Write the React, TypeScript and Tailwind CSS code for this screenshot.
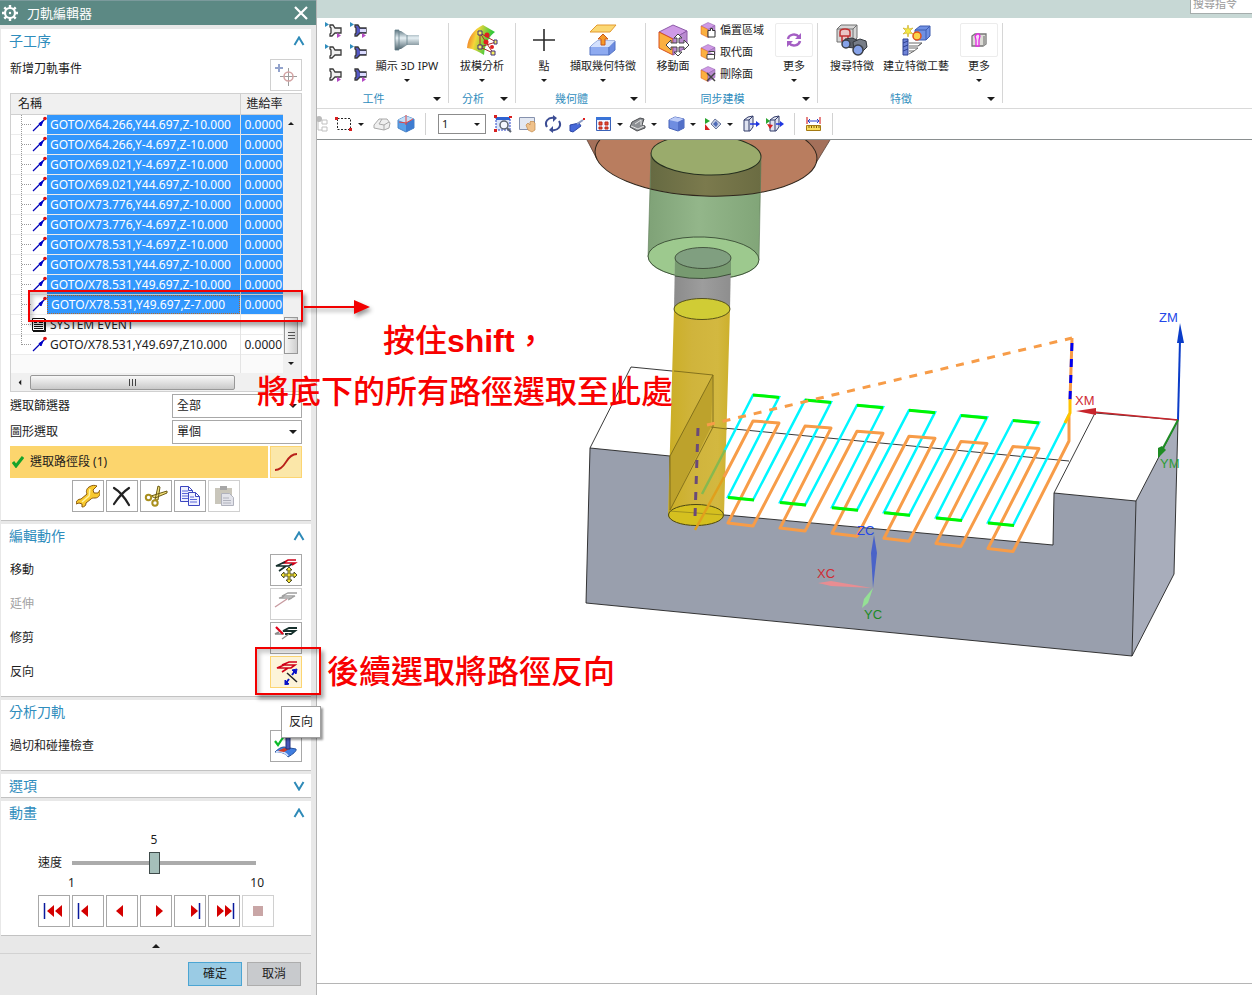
// Toolpath editor: dialog on the left, ribbon and 3D part view on the right,
// with the tutorial call-outs laid over both.

import { useState } from "react";
import type { ReactNode } from "react";
import { clsx } from "clsx";

const UI = "font-['Noto_Sans','Noto_Sans_CJK_TC',sans-serif]";

/* ---------- small shared pieces ---------- */

function Down({ big, className }: { big?: boolean; className?: string }) {
  return (
    <svg
      aria-hidden="true"
      viewBox="0 0 8 4"
      className={clsx("shrink-0 fill-[#1c1c1c]", big ? "h-1 w-2" : "h-[3px] w-[6px]", className)}
    >
      <path d="M0 0h8L4 4z" />
    </svg>
  );
}

function Svg({ w, h, children }: { w: number; h: number; children: ReactNode }) {
  return (
    <svg aria-hidden="true" width={w} height={h} viewBox={`0 0 ${w} ${h}`} fill="none" className="shrink-0">
      {children}
    </svg>
  );
}

function IconButton({
  label,
  tone = "normal",
  children,
}: {
  label: string;
  tone?: "normal" | "disabled" | "active" | "picked";
  children: ReactNode;
}) {
  return (
    <button
      type="button"
      aria-label={label}
      disabled={tone === "disabled"}
      className={clsx(
        "flex size-8 shrink-0 items-center justify-center border",
        tone === "normal" && "border-[#a8a8a8] bg-white",
        tone === "disabled" && "border-[#d0d0d0] bg-white",
        tone === "active" && "border-[#fcd572] bg-[#fdf4d9]",
        tone === "picked" && "border-[#fcd572] bg-[#fbe7a9]",
      )}
    >
      {children}
    </button>
  );
}

/* ---------- dialog icons ---------- */

function GotoIcon() {
  return (
    <Svg w={16} h={16}>
      <path d="M2 15 14 3" stroke="#0000b4" strokeWidth="1.200" />
      <path d="M8 7.500 12 5l-2 5z" fill="#0000c8" stroke="#0000c8" />
      <circle cx="14" cy="2.500" r="1.800" fill="#e01010" />
    </Svg>
  );
}

function EventIcon() {
  return (
    <Svg w={16} h={16}>
      <path d="M1.500 2.500h12v12h-12z" fill="#fff" stroke="#111" />
      <path d="M14.500 3v12.500H2" stroke="#111" />
      <path d="M3 6.500h3M8 4.500h4M8 6.500h4M3 8.500h9M3 10.500h9M3 12.500h9M3 4.500h3" stroke="#111" />
    </Svg>
  );
}

const WrenchIcon = () => (
  <Svg w={24} h={24}>
    <path
      d="M13 3c3-2 6-2 8-1l-4 4 1 3 4 0 2-3c1 4-1 8-5 8-2 0-3 0-4 1l-5 4c0 3-2 4-4 4l0-3-3-1-3 1c0-3 2-5 5-5l6-5c-1-2-1-5 2-7z"
      fill="#f8c92e"
      stroke="#8a5a10"
    />
    <path d="M14 5c-1 3 0 5-1 7l-7 6" stroke="#fff3a0" strokeWidth="1.500" />
  </Svg>
);

const DeleteIcon = () => (
  <Svg w={24} h={24}>
    <path d="M4 4c5 3 11 10 15 17M19 4C13 8 8 14 4 20" stroke="#222" strokeWidth="2.200" strokeLinecap="round" />
  </Svg>
);

const ScissorsIcon = () => (
  <Svg w={24} h={24}>
    <path d="m7 12 16-5 0 2-12 5zM11 16l3-14 2 1-2 13z" fill="#f3e27b" stroke="#6b5a12" />
    <circle cx="4.500" cy="13.500" r="2.700" fill="#fff" stroke="#a98f1e" strokeWidth="2" />
    <circle cx="11" cy="19" r="2.700" fill="#fff" stroke="#a98f1e" strokeWidth="2" />
  </Svg>
);

const CopyIcon = () => (
  <Svg w={24} h={24}>
    <path d="M2.500 2.500h8l4 4v11h-12zM10.500 2.500v4h4" fill="#eef0ff" stroke="#3c46c0" />
    <path d="M4 7h6M4 9.500h6M4 12h6M4 14.500h6" stroke="#5b66d8" />
    <path d="M10.500 8.500h7l4 4v9h-11zM17.500 8.500v4h4" fill="#eef0ff" stroke="#3c46c0" />
    <path d="M12 13h4M12 15.500h7M12 18h7" stroke="#5b66d8" />
  </Svg>
);

const PasteIcon = () => (
  <Svg w={24} h={24}>
    <path d="M3 4h17v16H3z" fill="#c9c6bb" />
    <path d="M8 2h7v4H8z" fill="#a7a7a7" />
    <path d="M9.500 9.500h8l4 4v8h-12z" fill="#e2e3ea" stroke="#b0b2bd" />
    <path d="M11 14h6M11 16.500h8M11 19h8" stroke="#b0b2bd" />
  </Svg>
);

const AddEventIcon = () => (
  <Svg w={26} h={26}>
    <path d="M6 2v8M2 6h8" stroke="#93a3cc" strokeWidth="2" />
    <path d="M15.500 6v18M7 14.500h17" stroke="#9c9c9c" />
    <circle cx="15.500" cy="14.500" r="4.500" stroke="#d3a3a3" strokeWidth="1.500" />
  </Svg>
);

const MoveIcon = () => (
  <Svg w={26} h={26}>
    <path d="M23 3h-8l-5 3h12l-3 2" stroke="#d00018" strokeWidth="1.700" />
    <path d="M12 5 3 9h13l3-2M13 9l-7 5" stroke="#16302c" strokeWidth="1.600" />
    <path
      d="m16 10 3 3h-2v4h4v-2l3 3-3 3v-2h-4v4h2l-3 3-3-3h2v-4h-4v2l-3-3 3-3v2h4v-4h-2z"
      fill="#f5e23a"
      stroke="#44441a"
      strokeWidth=".9"
    />
  </Svg>
);

const ExtendIcon = () => (
  <Svg w={26} h={26}>
    <path d="M24 2h-9l-6 3h13l-4 2H6l6-2M19 7l-4 2" stroke="#a0a0a0" strokeWidth="1.300" />
    <path d="M14 8 2 16" stroke="#c79a9f" strokeWidth="1.400" />
  </Svg>
);

const TrimIcon = () => (
  <Svg w={26} h={26}>
    <path d="M24 3h-8l-6 3h12l-4 3h-6" stroke="#16302c" strokeWidth="1.800" />
    <path d="M11 9H2l4-2M16 9l-7 5" stroke="#8b8b8b" strokeWidth="1.400" />
    <path d="m3 2 7 7" stroke="#e00018" strokeWidth="2.200" />
  </Svg>
);

const ReverseIcon = () => (
  <Svg w={26} h={26}>
    <path d="M24 3h-8l-7 3h13l-4 3H4l7-3M15 9l-6 4" stroke="#d00018" strokeWidth="1.600" />
    <path d="m14 14 10 9" stroke="#222" strokeWidth="1.500" />
    <path d="m24 10-1 5-4-4zM12 26l0-5 4 4z" fill="#0a14c8" stroke="#0a14c8" />
    <path d="m22 12-3 4M13 24l3-4" stroke="#0a14c8" strokeWidth="2" />
  </Svg>
);

const CheckCollisionIcon = () => (
  <Svg w={26} h={26}>
    <path d="M2 19c3-3 6-5 9-5l12 2c1 2-3 5-8 8-3-4-6-5-13-5z" fill="#3f7de0" stroke="#25509c" />
    <path d="M3 19c6-1 10 1 12 4" stroke="#cfe0ff" strokeWidth="1.800" />
    <path d="m5 18 6-3 5 1-5 3z" fill="#d23a22" />
    <path d="M13 4h4v12h-4z" fill="#4a58b8" stroke="#22307a" />
    <path d="m2 8 3 4 6-9" stroke="#0cba2c" strokeWidth="2.200" />
  </Svg>
);

/* ---------- dialog ---------- */

function Section({
  title,
  open = true,
  hideToggle,
  children,
}: {
  title: string;
  open?: boolean;
  hideToggle?: boolean;
  children?: ReactNode;
}) {
  return (
    <section className="mb-[3px] ml-px border-b border-[#c2c2c2] bg-white pr-[9px] pl-2">
      <div className="flex h-[23px] items-center justify-between">
        <h2 className="text-[14px] leading-5 text-[#2f8dbd]">{title}</h2>
        {!hideToggle && (
          <button type="button" aria-label={title} aria-expanded={open} className="-mr-[3px]">
            <svg viewBox="0 0 12 10" className={clsx("h-[10px] w-3", !open && "rotate-180")}>
              <path d="M1.500 9 6 1.500 10.500 9" fill="none" stroke="#2e8ab8" strokeWidth="2" />
            </svg>
          </button>
        )}
      </div>
      {children}
    </section>
  );
}

const SELECTED = [
  "GOTO/X64.266,Y44.697,Z-10.000",
  "GOTO/X64.266,Y-4.697,Z-10.000",
  "GOTO/X69.021,Y-4.697,Z-10.000",
  "GOTO/X69.021,Y44.697,Z-10.000",
  "GOTO/X73.776,Y44.697,Z-10.000",
  "GOTO/X73.776,Y-4.697,Z-10.000",
  "GOTO/X78.531,Y-4.697,Z-10.000",
  "GOTO/X78.531,Y44.697,Z-10.000",
  "GOTO/X78.531,Y49.697,Z-10.000",
  "GOTO/X78.531,Y49.697,Z-7.000",
];

const ROWS = [
  ...SELECTED.map((name) => ({ name, rate: "0.0000", selected: true })),
  { name: "SYSTEM EVENT", rate: "", selected: false },
  { name: "GOTO/X78.531,Y49.697,Z10.000", rate: "0.0000", selected: false },
];

function PathTable() {
  return (
    <div className="border border-[#d0d0d0] bg-[#f0f0f0]">
      <div className="flex">
        <div className="min-w-0 flex-1">
          <table className="w-full table-fixed border-collapse text-left text-[12px] leading-[19px]">
            <thead>
              <tr className="h-5">
                <th scope="col" className="border-r border-b border-[#d0d0d0] p-0 pl-[7px] font-normal">
                  名稱
                </th>
                <th scope="col" className="w-[43px] border-b border-[#d0d0d0] p-0 pl-[6px] font-normal whitespace-nowrap">
                  進給率
                </th>
              </tr>
            </thead>
            <tbody className="bg-white">
              {ROWS.map((row, i) => (
                <tr key={i} className="h-5 border-b border-[#ececec]">
                  <td className="border-r border-[#e4e4e4] p-0">
                    <div className="flex h-[19px] items-center">
                      <span
                        className={clsx(
                          "ml-[10px] w-[10px] shrink-0 border-l border-dotted border-[#999]",
                          i === ROWS.length - 1 ? "h-[10px] self-start border-b" : "h-full",
                        )}
                      >
                        {i < ROWS.length - 1 && <span className="mt-[9px] block border-t border-dotted border-[#999]" />}
                      </span>
                      <span className="flex w-4 shrink-0 justify-center">
                        {row.rate ? <GotoIcon /> : <EventIcon />}
                      </span>
                      <span
                        className={clsx(
                          "h-full min-w-0 flex-1 overflow-hidden pl-[3px] whitespace-nowrap",
                          row.selected ? "bg-[#3297fd] text-white" : "text-[#1c1c1c]",
                          i === SELECTED.length - 1 && "border border-dotted border-[#b5682a] pl-[2px] leading-[17px]",
                        )}
                      >
                        {row.name}
                      </span>
                    </div>
                  </td>
                  <td className={clsx("overflow-hidden p-0 pl-1", row.selected ? "bg-[#3297fd] text-white" : "text-[#1c1c1c]")}>
                    {row.rate}
                  </td>
                </tr>
              ))}
              <tr className="h-[19px] bg-[#fafafa]">
                <td className="border-r border-[#e4e4e4]" />
                <td />
              </tr>
            </tbody>
          </table>
        </div>
        <div className="flex w-[18px] shrink-0 flex-col items-center pt-7 pr-[2px]" aria-hidden="true">
          <Down className="rotate-180" />
          <span className="mt-auto flex h-[37px] w-[14px] flex-col items-center justify-center gap-[2px] border border-[#989898] bg-linear-to-r from-[#f6f6f6] to-[#cfcfcf]">
            <i className="h-px w-[7px] bg-[#555]" />
            <i className="h-px w-[7px] bg-[#555]" />
            <i className="h-px w-[7px] bg-[#555]" />
          </span>
          <Down className="my-2" />
        </div>
      </div>
      <div className="flex h-[18px] items-center" aria-hidden="true">
        <Down className="mx-[6px] rotate-90" />
        <span className="ml-px flex h-[15px] w-[205px] items-center justify-center gap-[2px] rounded-xs border border-[#989898] bg-linear-to-b from-[#f8f8f8] to-[#c9c9c9]">
          <i className="h-[7px] w-px bg-[#444]" />
          <i className="h-[7px] w-px bg-[#444]" />
          <i className="h-[7px] w-px bg-[#444]" />
        </span>
      </div>
    </div>
  );
}

function PickRow({ id, label, value }: { id: string; label: string; value: string }) {
  return (
    <div className="flex h-6 items-center justify-between">
      <label htmlFor={id}>{label}</label>
      <span className="relative flex">
        <select id={id} className="h-6 w-[130px] appearance-none border border-[#a8a8a8] bg-white pl-1 text-[12px] leading-[18px]">
          <option>{value}</option>
        </select>
        <Down big className="pointer-events-none absolute top-[10px] right-[5px]" />
      </span>
    </div>
  );
}

const ACTIONS: { label: string; tone?: "disabled" | "active"; icon: ReactNode }[] = [
  { label: "移動", icon: <MoveIcon /> },
  { label: "延伸", tone: "disabled", icon: <ExtendIcon /> },
  { label: "修剪", icon: <TrimIcon /> },
  { label: "反向", tone: "active", icon: <ReverseIcon /> },
];

// Arrow shapes for the playback row, in a 24px box.
const PLAYBACK: { label: string; arrows: string; bar?: number }[] = [
  { label: "First", arrows: "M12 6v12l-7-6zM20 6v12l-7-6z", bar: 2.5 },
  { label: "Previous event", arrows: "M12 6v12l-7-6z", bar: 2.5 },
  { label: "Step back", arrows: "M13 6v12l-7-6z" },
  { label: "Play", arrows: "M12 6v12l7-6z" },
  { label: "Next event", arrows: "M13 6v12l7-6z", bar: 21.5 },
  { label: "Last", arrows: "M5 6v12l7-6zM13 6v12l7-6z", bar: 21.5 },
];

function EditorDialog() {
  const [speed, setSpeed] = useState(5);
  return (
    <aside className="relative flex w-[317px] shrink-0 flex-col border-r border-[#b4b4b4] bg-[#e8e8e8] text-[12px] leading-[18px] text-[#1c1c1c]">
      <header className="mb-1 flex h-[25px] items-center border-t border-[#7b9a9c] bg-[#5c8984] pr-2 pl-[2px] text-white">
        <svg viewBox="0 0 16 16" className="size-4" aria-hidden="true">
          <circle cx="8" cy="8" r="5" fill="none" stroke="#fff" strokeWidth="2.200" />
          <path
            d="M8 0v3M8 13v3M0 8h3M13 8h3M2.300 2.300l2 2M11.700 11.700l2 2M13.700 2.300l-2 2M4.300 11.700l-2 2"
            stroke="#fff"
            strokeWidth="2.400"
          />
          <circle cx="8" cy="8" r="1.200" fill="#fff" />
        </svg>
        <h1 className="ml-[9px] text-[13px]">刀軌編輯器</h1>
        <button type="button" aria-label="Close" className="ml-auto">
          <svg viewBox="0 0 14 14" className="size-[14px]">
            <path d="m1 1 12 12M13 1 1 13" stroke="#fff" strokeWidth="2.200" />
          </svg>
        </button>
      </header>

      <div className="mr-[5px]">
        <Section title="子工序">
          <div className="flex flex-col gap-[2px] pt-[7px] pb-2 pl-px">
            <div className="flex h-8 justify-between">
              <span className="leading-5">新增刀軌事件</span>
              <IconButton label="新增刀軌事件" tone="disabled">
                <AddEventIcon />
              </IconButton>
            </div>
            <PathTable />
            <PickRow id="filter" label="選取篩選器" value="全部" />
            <PickRow id="graphic" label="圖形選取" value="單個" />
            <div className="flex h-8 gap-[2px]">
              <div className="flex flex-1 items-center bg-[#fcd56d] pl-[2px]">
                <svg viewBox="0 0 12 12" className="size-3" aria-hidden="true">
                  <path d="m1 6 3 4L11 1" fill="none" stroke="#16a32b" strokeWidth="3" />
                </svg>
                <span className="ml-[6px]">選取路徑段 (1)</span>
              </div>
              <IconButton label="選取路徑段" tone="picked">
                <Svg w={24} h={20}>
                  <path d="M1 18c5 0 8-3 11-8s6-8 11-8" stroke="#b8201a" strokeWidth="1.800" />
                </Svg>
              </IconButton>
            </div>
            <div className="flex gap-[2px] pl-[62px]">
              <IconButton label="Edit"><WrenchIcon /></IconButton>
              <IconButton label="Delete"><DeleteIcon /></IconButton>
              <IconButton label="Cut"><ScissorsIcon /></IconButton>
              <IconButton label="Copy"><CopyIcon /></IconButton>
              <IconButton label="Paste" tone="disabled"><PasteIcon /></IconButton>
            </div>
          </div>
        </Section>

        <Section title="編輯動作">
          <div className="flex flex-col gap-[2px] pt-[7px] pb-2 pl-px">
            {ACTIONS.map((a) => (
              <div key={a.label} className="flex h-8 items-center justify-between">
                <span className={clsx(a.tone === "disabled" && "text-[#a3a3a3]")}>{a.label}</span>
                <IconButton label={a.label} tone={a.tone}>{a.icon}</IconButton>
              </div>
            ))}
          </div>
        </Section>

        <Section title="分析刀軌" hideToggle>
          <div className="flex h-[47px] items-center justify-between pt-[7px] pb-2 pl-px">
            <span>過切和碰撞檢查</span>
            <IconButton label="過切和碰撞檢查"><CheckCollisionIcon /></IconButton>
          </div>
        </Section>

        <Section title="選項" open={false} />

        <Section title="動畫">
          <div className="pt-2 pb-2 pl-[29px]">
            <div className="grid w-[219px] grid-cols-[34px_1fr] items-center">
              <output htmlFor="speed" className="col-start-2 h-5 pr-7 text-center leading-4">{speed}</output>
              <label htmlFor="speed">速度</label>
              <input
                id="speed"
                type="range"
                min={1}
                max={10}
                value={speed}
                onChange={(e) => setSpeed(Number(e.target.value))}
                className="h-[22px] w-[184px] appearance-none bg-transparent [&::-webkit-slider-runnable-track]:h-1 [&::-webkit-slider-runnable-track]:bg-[#ababab] [&::-webkit-slider-thumb]:-mt-[9px] [&::-webkit-slider-thumb]:h-[22px] [&::-webkit-slider-thumb]:w-[11px] [&::-webkit-slider-thumb]:appearance-none [&::-webkit-slider-thumb]:border [&::-webkit-slider-thumb]:border-[#3f4b4a] [&::-webkit-slider-thumb]:bg-[#a5bfba]"
              />
              <span className="col-start-2 -ml-1 flex w-[196px] justify-between leading-[18px]">
                <span>1</span>
                <span>10</span>
              </span>
            </div>
            <div className="mt-[3px] flex gap-[2px]">
              {PLAYBACK.map((p) => (
                <IconButton key={p.label} label={p.label}>
                  <Svg w={24} h={24}>
                    <path d={p.arrows} fill="#d40000" />
                    {p.bar && <path d={`M${p.bar} 4v16`} stroke="#0a1a9c" strokeWidth="1.500" />}
                  </Svg>
                </IconButton>
              ))}
              <IconButton label="Stop" tone="disabled">
                <span className="size-[10px] bg-[#c9a6a6]" />
              </IconButton>
            </div>
          </div>
        </Section>
      </div>

      <button type="button" aria-label="Collapse" className="-mt-[3px] mr-[5px] flex h-[18px] items-center justify-center border-b border-[#d2d2d2] pt-[2px]">
        <Down big className="rotate-180" />
      </button>
      <footer className="flex justify-end gap-[5px] pt-2 pr-[15px] pb-2">
        <button type="button" className="h-6 w-[54px] border border-[#4ba5d3] bg-[#9acbe4]">確定</button>
        <button type="button" className="h-6 w-[54px] border border-[#adadad] bg-[#c8cacd]">取消</button>
      </footer>

      {/* tooltip and highlight frames */}
      <div role="tooltip" className="absolute top-[706px] left-[281px] flex h-8 w-10 items-center justify-center border border-[#a0a0a0] bg-white shadow-[2px_2px_2px_#0006]">
        反向
      </div>
      <div className="absolute top-[290px] left-[28px] h-8 w-[275px] border-2 border-[#f20000] shadow-[3px_4px_4px_#0005,inset_3px_4px_4px_#0003]" />
      <div className="absolute top-[647px] left-[255px] h-12 w-[66px] border-2 border-[#f20000] shadow-[3px_4px_4px_#0005,inset_3px_4px_4px_#0003]" />
    </aside>
  );
}

/* ---------- ribbon icons ---------- */

function StockIcon({ filled, left, right }: { filled?: boolean; left?: boolean; right?: boolean }) {
  return (
    <Svg w={18} h={16}>
      <path
        d="M5 3h3l2 3h6v5h-6l-3 3H5v-2l1-1V6L5 5z"
        fill={filled ? "#5558c4" : "#f1f1f1"}
        stroke="#3a3a3a"
        strokeWidth="1.300"
      />
      {filled && <path d="M10 8.500h6" stroke="#dcdcff" strokeWidth="3" />}
      {left && <path d="M0 0v5l4-2.500z" fill="#2f8dbd" />}
      {right && <path d="M12 11v5l4-2.500z" fill="#b44bc4" />}
    </Svg>
  );
}

function CubeIcon({ size, children }: { size: number; children?: ReactNode }) {
  return (
    <svg aria-hidden="true" width={size} height={size} viewBox="0 0 32 32" fill="none" className="shrink-0">
      <path d="m2 8 14-7 14 6-14 8z" fill="#cf9ae6" stroke="#8d5ba8" />
      <path d="m2 8 14 7v16L2 24z" fill="#fbb040" stroke="#d8501e" />
      <path d="m30 7-14 8v16l14-8z" fill="#b98bd0" stroke="#8d5ba8" />
      {children}
    </svg>
  );
}

const MOVE = "m21 10 4 4h-3v5h5v-3l5 5-5 5v-3h-5v5h3l-4 4-4-4h3v-5h-6v3l-5-5 5-5v3h6v-5h-3z";

const IpwIcon = () => (
  <Svg w={26} h={24}>
    <defs>
      <linearGradient id="steel" x1="0" y1="0" x2="0" y2="1">
        <stop offset="0" stopColor="#5d7580" />
        <stop offset=".4" stopColor="#e6f0f4" />
        <stop offset="1" stopColor="#4d626c" />
      </linearGradient>
    </defs>
    <path d="M1 2h4v20H1zM5 3h2l6 4v10l-6 4H5zM13 7h12v10H13z" fill="url(#steel)" />
    <path d="M1 2h4v20H1zM13 7v10" stroke="#64808c" strokeWidth=".8" />
  </Svg>
);

const DraftIcon = () => (
  <Svg w={32} h={32}>
    <defs>
      <linearGradient id="heat" x1="0" y1="0" x2="1" y2=".3">
        <stop offset="0" stopColor="#f04a20" />
        <stop offset=".4" stopColor="#f5d63a" />
        <stop offset=".9" stopColor="#34c83c" />
      </linearGradient>
    </defs>
    <path d="M1 24C2 13 8 5 17 1l12 7c-6 4-10 12-11 23C13 28 8 25 1 24z" fill="url(#heat)" />
    <path d="m14 9 16 9-16 5V9l13 20-13-6" stroke="#a82a2a" />
    <circle cx="21" cy="11" r="2.500" fill="#e02020" />
    <circle cx="20" cy="18" r="2.500" fill="#e02020" />
    <circle cx="26" cy="23" r="2" fill="#e02020" />
    <path d="M12 7h4v4h-4zM12 21h4v4h-4zM28 16h3v4h-3zM25 27h4v4h-4z" fill="#f8ef60" stroke="#41307c" />
  </Svg>
);

const PointIcon = () => (
  <Svg w={24} h={24}>
    <path d="M12 1v22M1 12h22" stroke="#2b2b2b" strokeWidth="1.600" />
  </Svg>
);

const ExtractIcon = () => (
  <Svg w={30} h={32}>
    <path d="m2 8 7-7h19l-6 7z" fill="#fbd874" stroke="#e39a30" />
    <path d="m2 23 7-6h18l-6 6v8H2z" fill="#8eaaf0" stroke="#5575c4" />
    <path d="m27 17-6 6v8l6-5z" fill="#6d8be0" stroke="#5575c4" />
    <path d="m2 23 7-6h18l-6 6z" fill="#d3e0fd" />
    <path d="m15 10 5 5h-3v6h-4v-6h-3z" fill="#f59b2a" stroke="#c8561a" />
  </Svg>
);

const RefreshIcon = () => (
  <Svg w={16} h={16}>
    <path d="M2 7c1-5 8-6 11-2M14 9c-1 5-8 6-11 2" stroke="#a45ec4" strokeWidth="2.500" />
    <path d="M15 1v6H9zM1 15V9h6z" fill="#a45ec4" />
  </Svg>
);

const FindIcon = () => (
  <Svg w={34} h={32}>
    <path d="m2 5 4-4h16v13l-4 4H2z" fill="#d5d5d5" stroke="#707070" />
    <path d="M18 5v13M2 5h16l4-4" stroke="#707070" />
    <path d="M5 8c0-4 10-4 10 0v4H5zM7 12v5h6v-5" fill="#e9c5c5" stroke="#c03232" strokeWidth="1.500" />
    <path d="m10 15 7-1 8 3-6 7-8-1z" fill="#5b6069" stroke="#33373d" />
    <path d="m18 18 7-3 6 2 1 6-7 7-6-4z" fill="#777d87" stroke="#33373d" />
    <circle cx="11" cy="20" r="4" fill="#86a2e8" stroke="#3b3f48" strokeWidth="1.500" />
    <circle cx="23" cy="26" r="5" fill="#86a2e8" stroke="#3b3f48" strokeWidth="1.500" />
  </Svg>
);

const FeatureProcessIcon = () => (
  <Svg w={32} h={32}>
    <path d="m15 6 5-4h10v10l-4 4H15z" fill="#6f8fe2" stroke="#3f5cb0" />
    <path d="M15 6h11l4-4M26 6v10" stroke="#3f5cb0" />
    <circle cx="17" cy="12" r="4" fill="#fbd34a" stroke="#e0501c" strokeWidth="1.500" />
    <path d="m8 1 1 4 4-1-3 3 3 3-4-1-1 4-1-4-4 1 3-3-3-3 4 1z" fill="#f3e845" stroke="#c8a820" strokeWidth=".6" />
    <path d="M3 15h5v16H3z" fill="#6f84d8" stroke="#2e4192" />
    <path d="M3 19l5-2M3 23l5-2M3 27l5-2" stroke="#2e4192" />
    <path d="M9 19h13l-4 3H9M9 24h9l-4 3H9M9 30l5-3M22 19l-4 3" stroke="#6b6b6b" />
  </Svg>
);

const BracketIcon = () => (
  <Svg w={16} h={16}>
    <path d="m1 4 3-2h11v10l-3 2H1z" fill="#dcdcd6" stroke="#777" strokeWidth="1.300" />
    <path d="M12 4h3v8l-3 2z" fill="#a3a3a0" />
    <path d="M5 14V8L4 4l2-2h2l1 2-1 4v6z" fill="#f6d9f6" stroke="#e32ae0" strokeWidth="1.300" />
  </Svg>
);

/* ---------- ribbon ---------- */

function RibbonButton({
  label,
  icon,
  menu = true,
  boxed,
  className,
}: {
  label: string;
  icon: ReactNode;
  menu?: boolean;
  boxed?: boolean;
  className: string;
}) {
  return (
    <button type="button" className={clsx("flex shrink-0 flex-col items-center", className)}>
      <span className={clsx("flex h-[34px] w-full items-center justify-center", boxed && "rounded-xs border border-[#ececec]")}>
        {icon}
      </span>
      <span className="text-[11px] leading-[18px] whitespace-nowrap">{label}</span>
      {menu && <Down className="mt-1" />}
    </button>
  );
}

function RibbonGroup({ title, className, children }: { title: string; className: string; children: ReactNode }) {
  return (
    <>
      <div className={clsx("flex shrink-0 flex-col justify-between pt-[5px]", className)}>
        <div className="flex">{children}</div>
        <div className="flex h-[18px] items-center text-[11px] text-[#2f8dbd]">
          <span className="flex-1 pl-1 text-center">{title}</span>
          <span className="flex w-[22px] justify-center"><Down big /></span>
        </div>
      </div>
      <div className="my-[5px] w-px shrink-0 bg-[#d6d6d6]" />
    </>
  );
}

const FACE_TOOLS = [
  { label: "偏置區域", overlay: <path d="M16 17h5v-4h4v4h5v13H16z" fill="#fff" stroke="#333" strokeWidth="2" /> },
  { label: "取代面", overlay: <path d="M14 21h15v9H14zM17 15h12v6" fill="#fff" stroke="#444" strokeWidth="2" /> },
  { label: "刪除面", overlay: <path d="m14 14 16 16M30 14 14 30" stroke="#444" strokeWidth="3" /> },
];

function Ribbon() {
  return (
    <nav className="flex h-[91px] overflow-hidden border-b border-[#d9d9d9] bg-white">
      <RibbonGroup title="工件" className="w-[131px]">
        <div className="-mt-px grid shrink-0 grid-cols-2 gap-x-[7px] gap-y-[6px] pr-[6px] pl-2">
          <StockIcon left right />
          <StockIcon filled left right />
          <StockIcon left />
          <StockIcon filled left />
          <StockIcon right />
          <StockIcon filled right />
        </div>
        <RibbonButton label="顯示 3D IPW" icon={<IpwIcon />} className="w-[66px]" />
      </RibbonGroup>
      <RibbonGroup title="分析" className="w-[66px]">
        <RibbonButton label="拔模分析" icon={<DraftIcon />} className="w-full" />
      </RibbonGroup>
      <RibbonGroup title="幾何體" className="w-[129px]">
        <RibbonButton label="點" icon={<PointIcon />} className="ml-[2px] w-[52px]" />
        <RibbonButton label="擷取幾何特徵" icon={<ExtractIcon />} className="w-[66px]" />
      </RibbonGroup>
      <RibbonGroup title="同步建模" className="w-[171px]">
        <RibbonButton
          label="移動面"
          menu={false}
          className="w-[54px]"
          icon={
            <CubeIcon size={32}>
              <path d={MOVE} fill="#fff" stroke="#444" />
            </CubeIcon>
          }
        />
        <div className="-mt-1 flex w-[75px] flex-col">
          {FACE_TOOLS.map((t) => (
            <button key={t.label} type="button" className="flex h-[22px] items-center gap-1 text-[11px] whitespace-nowrap">
              <CubeIcon size={16}>{t.overlay}</CubeIcon>
              {t.label}
            </button>
          ))}
        </div>
        <RibbonButton label="更多" boxed icon={<RefreshIcon />} className="w-[38px]" />
      </RibbonGroup>
      <RibbonGroup title="特徵" className="w-[184px]">
        <RibbonButton label="搜尋特徵" menu={false} icon={<FindIcon />} className="ml-[5px] w-[58px]" />
        <RibbonButton label="建立特徵工藝" menu={false} icon={<FeatureProcessIcon />} className="w-[70px]" />
        <RibbonButton label="更多" boxed icon={<BracketIcon />} className="ml-[9px] w-[38px]" />
      </RibbonGroup>
    </nav>
  );
}

function Tool({ label, menu, className, children }: { label: string; menu?: boolean; className?: string; children: ReactNode }) {
  return (
    <button type="button" aria-label={label} className={clsx("flex shrink-0 items-center", className)}>
      <svg viewBox="0 0 20 20" className="size-5" fill="none" aria-hidden="true">{children}</svg>
      {menu && <Down className="mx-1" />}
    </button>
  );
}

const Divider = ({ className }: { className: string }) => (
  <span className={clsx("h-[22px] w-px shrink-0 bg-[#d2d2d2]", className)} />
);

function ToolStrip() {
  return (
    <div className="flex h-[31px] items-center overflow-hidden border-b border-[#8a8f90] bg-white">
      <Tool label="Navigator" className="-ml-2">
        <circle cx="10" cy="5" r="3" fill="#bbb" />
        <path d="M9 8v8h4M13 6h5v4h-5zM13 13h5v4h-5z" stroke="#c0c0c0" />
      </Tool>
      <Tool label="Selection rectangle" menu className="ml-[5px]">
        <path d="M3.500 4.500h13v11h-13z" stroke="#222" strokeDasharray="2 1.500" />
        <path d="M1 3h3v3H1zM15 14h3v3h-3z" fill="#d82020" />
      </Tool>
      <Tool label="Ghost body" className="ml-1">
        <path d="m2 11 5-6h8l3 4-1 5-5 2-10-2zM7 10l5 1v5M12 11l5-3M7 10l3-5" fill="#efefef" stroke="#a9a9a9" />
      </Tool>
      <Tool label="Solid body" className="ml-1">
        <path d="m2 6 8-4 8 3v9l-8 4-8-4z" fill="#5aa0e8" stroke="#4d86c6" />
        <path d="m2 6 8-4 8 3-8 4z" fill="#c5dff8" />
        <path d="M10 9v9l8-4V5z" fill="#3f7cd0" />
        <path d="M10 1v10M3 8l7 1 7-4" stroke="#e04545" />
      </Tool>
      <Divider className="ml-[9px]" />
      <span className="relative ml-3 flex shrink-0">
        <select aria-label="Work layer" className="h-5 w-12 appearance-none border border-[#8c8c8c] bg-white pl-[3px] text-[11px] leading-4">
          <option>1</option>
        </select>
        <Down className="pointer-events-none absolute top-[9px] right-[6px]" />
      </span>
      <Tool label="Fit" className="ml-[7px]">
        <path d="M3 4h14v12H3z" fill="#dbe6fb" stroke="#2a45c8" strokeDasharray="2 1" />
        <path d="M3 3h14v3H3z" fill="#2f62d0" />
        <circle cx="11" cy="11" r="4" fill="#f4f8ff" stroke="#5c6470" strokeWidth="1.500" />
        <path d="m14 14 4 4" stroke="#5c6470" strokeWidth="2" />
        <path d="M1 1h3v3H1zM16 2h3v2h-3zM1 15h3v3H1z" fill="#d82020" />
      </Tool>
      <Tool label="Pan" className="ml-1">
        <path d="M2.500 3.500h15v12h-15z" fill="#e3e8f2" stroke="#8692ae" />
        <path d="m9 11 2-2 2 2V8l1-1 1 1 1-1 2 2v7l-3 2-4-2z" fill="#efc18b" stroke="#c28a4a" strokeWidth=".7" />
      </Tool>
      <Tool label="Rotate" className="ml-[6px]">
        <path d="M4 13C1 8 5 3 11 4M16 7c3 5-1 10-7 9" stroke="#3c4d94" strokeWidth="2" />
        <path d="m10 1 4 3-4 4zM10 12l-4 4 4 3z" fill="#3c4d94" />
      </Tool>
      <Tool label="Probe" className="ml-1">
        <path d="m3 11 9-2 2 3-8 6-3-1z" fill="#4668d8" stroke="#2c46a8" />
        <path d="m10 10 6-4" stroke="#8c9bc4" strokeWidth="2" />
        <path d="M16 4h2v2h-2z" fill="#e02020" />
      </Tool>
      <Tool label="View layout" menu className="ml-[6px]">
        <path d="M3.500 3.500h14v13h-14z" fill="#eef3ff" stroke="#3a62b8" />
        <path d="M3 3h15v3H3z" fill="#3a74d8" />
        <path d="M6 8h3v3H6zM12 8h3v3h-3zM6 13h3v2H6zM12 13h3v2h-3z" fill="#e04a30" stroke="#c02a1a" />
      </Tool>
      <Tool label="Section" menu>
        <path d="m5 8 8-4 4 1-2 6 3 1v2l-8 3-7-4z" fill="#8d9094" stroke="#4d4f52" />
        <path d="m4 12 7 3 6-3M8 10l6-4v5" stroke="#e5e5e5" />
      </Tool>
      <Tool label="Shaded view" menu className="ml-[5px]">
        <path d="m3 6 6-3 9 2v9l-6 3-9-3z" fill="#6f8de0" stroke="#4762b8" />
        <path d="m3 6 6-3 9 2-6 3z" fill="#bccbf7" />
        <path d="m12 8 6-3v9l-6 3z" fill="#5370c8" />
      </Tool>
      <Tool label="Orient view" menu className="ml-[3px]">
        <path d="M2 4v6l5-3z" fill="#2aa52f" />
        <path d="m2 10 5 6H2z" fill="#d82020" />
        <path d="m8 10 4-5 6 5-5 5z" fill="#c4cee4" stroke="#69779c" />
        <path d="m10 10 3-3 2 3-2 3z" fill="#4f6bb8" />
      </Tool>
      <Tool label="Clip section" className="ml-1">
        <path d="m3 6 4-3 5-1v11l-3 4H3z" fill="#dfe3f0" stroke="#333c6a" />
        <path d="M3 6h5v11M8 6l4-4" stroke="#333c6a" />
        <path d="M9 10h8" stroke="#1f36e0" strokeWidth="1.500" />
        <path d="M15 7v6l4-3z" fill="#1f36e0" />
      </Tool>
      <Tool label="Edit section" className="ml-1">
        <path d="m5 6 4-3 5-1v11l-3 4H5z" fill="#dfe3f0" stroke="#333c6a" />
        <path d="M5 6h5v11M10 6l4-4" stroke="#333c6a" />
        <path d="M1 4v6l4-3z" fill="#2aa52f" />
        <path d="m2 10 6 1-3 4z" fill="#d82020" />
        <path d="M11 10h6" stroke="#1f36e0" strokeWidth="1.500" />
        <path d="M15 7v6l4-3z" fill="#1f36e0" />
      </Tool>
      <Divider className="ml-[9px]" />
      <Tool label="Measure" className="ml-2">
        <path d="M4 3v7M17 3v7" stroke="#d83030" strokeWidth="1.200" />
        <path d="M5 7h11M7 5 5 7l2 2M14 5l2 2-2 2" stroke="#2a40c8" />
        <path d="M3.500 11.500h14v5h-14z" fill="#fbdf5c" stroke="#a47a12" />
        <path d="M6 12v2M8.500 12v2M11 12v2M13.500 12v2M16 12v2" stroke="#7d5c0a" />
      </Tool>
      <Divider className="ml-[9px]" />
    </div>
  );
}

/* ---------- part view ---------- */

const LOOPS = [0, 1, 2, 3, 4, 5];

// Zigzag through the six slots; `drop` moves the whole pass down.
function passPath(start: string, end: string, drop: number) {
  const mids = LOOPS.map((i) => {
    const x = 52 * i;
    const y = 5.1 * i + drop;
    return `L${753 + x} ${395 + y}L${779 + x} ${397 + y}L${728 + x} ${497 + y}L${753 + x} ${500 + y}`;
  });
  return `M${start}${mids.join("")}L${end}`;
}

function PartView() {
  return (
    <svg
      role="img"
      aria-label="Part and toolpath"
      viewBox="317 140 935 843"
      className="block h-[843px] w-[935px] shrink-0 font-['Liberation_Sans',sans-serif] text-[13px]"
      fill="none"
    >
      <defs>
        <linearGradient id="collet">
          <stop offset="0" stopColor="#7fa277" />
          <stop offset=".45" stopColor="#93b68a" />
          <stop offset="1" stopColor="#81a578" />
        </linearGradient>
        <linearGradient id="band">
          <stop offset="0" stopColor="#666a42" />
          <stop offset=".5" stopColor="#7b7a4d" />
          <stop offset="1" stopColor="#6b6c42" />
        </linearGradient>
        <linearGradient id="shank">
          <stop offset="0" stopColor="#8b8b8b" />
          <stop offset=".5" stopColor="#9d9d9d" />
          <stop offset="1" stopColor="#8e8e8e" />
        </linearGradient>
        <linearGradient id="flute">
          <stop offset="0" stopColor="#cbae25" />
          <stop offset=".4" stopColor="#d0b43c" />
          <stop offset=".8" stopColor="#d3b840" />
          <stop offset="1" stopColor="#cdb02c" />
        </linearGradient>
        <clipPath id="holder">
          <ellipse cx="706" cy="155" rx="111" ry="41" transform="rotate(2 706 155)" />
        </clipPath>
      </defs>

      {/* stock block */}
      <path d="M631 367 713 375 670 456 590 448z" fill="#fff" />
      <path d="M590 448 670 456V510L1053 545 1054 493 1136 501 1132 656 586 603z" fill="#999fad" />
      <path d="M1136 501 1178 420 1174 574 1132 656z" fill="#a8adbb" />
      <path
        d="M586 603 590 448 631 367 713 375V427L1069 461M590 448 670 456 713 375M670 456V510L711 427M670 510 1053 545 1054 493 1136 501 1178 420 1095 413 1054 493M1136 501 1132 656 586 603M1132 656 1174 574 1178 420"
        stroke="#222"
        strokeWidth=".9"
      />

      {/* tool holder */}
      <path d="M587 140H830L816 163 597 160z" fill="#a4705a" />
      <ellipse cx="706" cy="155" rx="111" ry="41" fill="#b97d5f" transform="rotate(2 706 155)" />
      <path d="m587 140 10 19M830 140l-14 23" stroke="#5c4438" strokeWidth=".8" />
      <path d="M651 154 648 257a55.500 21 2 0 0 111 3L761 157z" fill="url(#collet)" />
      <g clipPath="url(#holder)">
        <path d="M651 154 650 205H760L761 157z" fill="url(#band)" />
      </g>
      <ellipse cx="706" cy="155" rx="111" ry="41" stroke="#2f261c" transform="rotate(2 706 155)" />
      <ellipse cx="706" cy="155" rx="55" ry="20" fill="#9aab6c" stroke="#26301f" transform="rotate(2 706 155)" />
      <ellipse cx="703.500" cy="258" rx="55.500" ry="21" fill="#9dc98e" stroke="#2d3d2a" strokeWidth=".8" transform="rotate(2 703 258)" />
      <path d="M651 154 648 257M761 157 759 260" stroke="#5b7754" strokeWidth=".6" />

      {/* shank and flute */}
      <path d="M675 258H731L730 309H674z" fill="url(#shank)" />
      <path d="M675 258H731V274Q704 282 675 276z" fill="#779a70" />
      <path d="M675 276Q704 282 731 274" stroke="#2d3d2a" strokeWidth=".8" />
      <ellipse cx="703" cy="258" rx="28" ry="10.500" fill="#809f80" stroke="#33402f" strokeWidth=".8" />
      <path d="M674 309H730L724 515a28 10.500 0 0 1-56 0z" fill="url(#flute)" />
      <path d="M713 375 670 456V510L711 427z" fill="#bda22c" />
      <path d="m674 371 39 4V427L670 510V456L713 375M711 427l16 2" stroke="#7c6a18" strokeWidth=".9" />
      <ellipse cx="702" cy="309" rx="28" ry="10.500" fill="#d0cc35" stroke="#4a4614" strokeWidth=".9" />
      <ellipse cx="696" cy="515" rx="27.500" ry="10.500" fill="#d5c01f" stroke="#4a4614" />
      <path d="m669 511 55 4" stroke="#8d7e1c" strokeWidth=".7" />

      {/* cutting passes */}
      <path d={passPath("724 452", "1069 415", 0)} stroke="#00f6ff" strokeWidth="2.500" />
      <path d="M702 494 725 450" stroke="#86b94f" strokeWidth="2.500" />
      <path d={passPath("724 477", "1069 441V415", 26)} stroke="#f79c48" strokeWidth="3" strokeLinejoin="round" />
      <path d="m695 530 29-53" stroke="#e0a01c" strokeWidth="2.500" />
      {LOOPS.map((i) => (
        <path
          key={i}
          d={`M${753 + 52 * i} ${395 + 5.1 * i}l26 2.500M${728 + 52 * i} ${497.5 + 5.1 * i}l26 2.500`}
          stroke="#00f500"
          strokeWidth="3"
        />
      ))}
      <path d="M707 425 1072 338" stroke="#f79c48" strokeWidth="3" strokeDasharray="8 8" />
      <path d="m1065 423 5-10V399" stroke="#ffc400" strokeWidth="3" />
      <path d="m1072 338-2 62" stroke="#f79c48" strokeWidth="3" />
      <path d="m1072 343-2 57" stroke="#0000f0" strokeWidth="3" strokeDasharray="8 8" />
      <path d="m698 428-3 89" stroke="#6a4a78" strokeWidth="3" strokeDasharray="8 8" />

      {/* machine axes */}
      <path d="m1178 420 2-80" stroke="#0a3cc8" strokeWidth="2" />
      <path d="m1180 323 4 20h-7z" fill="#0a3cc8" />
      <path d="m1178 420-84-8" stroke="#c8252c" strokeWidth="1.500" />
      <path d="m1076 411 20-3v7z" fill="#c8252c" />
      <path d="m1178 420-15 28" stroke="#1e8c24" strokeWidth="2" />
      <path d="m1158 458 0-10 4-2 4 4z" fill="#1e8c24" />
      <text x="1159" y="322" fill="#2347e8">ZM</text>
      <text x="1075" y="405" fill="#d02c34">XM</text>
      <text x="1160" y="468" fill="#2f9c38">YM</text>

      {/* work axes */}
      <path d="m874 535 3 18-4 35-2-35z" fill="#4a63c8" />
      <path d="m818 583 13-2 41 7-41-2z" fill="#e88d92" />
      <path d="m873 588-5 15-6 5 2-9z" fill="#95e095" />
      <text x="857" y="535" fill="#2347e8">ZC</text>
      <text x="817" y="578" fill="#d02c34">XC</text>
      <text x="864" y="619" fill="#1c8a26">YC</text>
    </svg>
  );
}

/* ---------- page ---------- */

export default function App() {
  return (
    <div className={clsx("relative flex min-h-screen overflow-hidden bg-white text-[#1c1c1c]", UI)}>
      <EditorDialog />
      <main className="flex min-w-0 flex-1 flex-col">
        <div className="flex h-[18px] justify-end bg-[#c7d8d5]">
          <input
            aria-label="Command search"
            placeholder="搜尋指令"
            className="h-[14px] w-[62px] border-b border-l border-[#a5adac] bg-white pb-[6px] pl-[2px] text-[11px] leading-[14px] placeholder:text-[#9a9a9a]"
          />
        </div>
        <Ribbon />
        <ToolStrip />
        <div className="flex-1 overflow-hidden border-b border-[#b5b5b5]">
          <PartView />
        </div>
        <div className="h-[11px]" />
      </main>

      {/* tutorial call-outs */}
      <div className="pointer-events-none absolute inset-0 font-['Liberation_Sans','Noto_Sans_CJK_TC',sans-serif] text-[32px] leading-10 font-medium whitespace-nowrap text-[#f80000]">
        <svg viewBox="0 0 70 22" className="absolute top-[298px] left-[303px] h-[22px] w-[70px] drop-shadow-[2px_3px_2px_#0006]" aria-hidden="true">
          <path d="M1 9h52" stroke="#f20000" strokeWidth="2" />
          <path d="m51 2 16 7-16 7z" fill="#f20000" />
        </svg>
        <p className="absolute top-[321px] left-[383px]">
          按住<strong className="font-bold">shift</strong>，
        </p>
        <p className="absolute top-[372px] left-[257px]">將底下的所有路徑選取至此處</p>
        <p className="absolute top-[652px] left-[327px]">後續選取將路徑反向</p>
      </div>
    </div>
  );
}
